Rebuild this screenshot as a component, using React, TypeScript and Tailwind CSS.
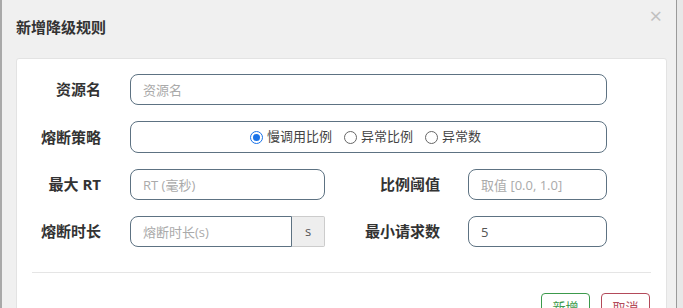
import React from 'react';

const FONT = { fontFamily: '"Open Sans", "Noto Sans CJK SC", sans-serif' };

function Radio({ checked, label }: { checked?: boolean; label: string }) {
  return (
    <label className="flex items-center gap-[4px]">
      <span
        className={
          checked
            ? 'w-[13px] h-[13px] rounded-full border border-[#1a73e8] flex items-center justify-center bg-white'
            : 'w-[13px] h-[13px] rounded-full border border-[#666] bg-white'
        }
      >
        {checked && <span className="w-[7px] h-[7px] rounded-full bg-[#1a73e8]" />}
      </span>
      <span>{label}</span>
    </label>
  );
}

const inputCls =
  'shrink-0 h-[31px] rounded-[8px] border border-[#5d7282] bg-white px-[12px] text-[13px] font-normal text-[#555] placeholder:text-[#aaa] outline-none';

export default function App() {
  return (
    <div className="w-[683px] h-[308px] flex overflow-hidden bg-[#f0f0f0]" style={FONT}>
      <div className="w-[2px] shrink-0 bg-[#a9a9a9]" />
      <div className="flex-1 flex flex-col">
        <div className="shrink-0 h-[58px] relative">
          <h4 className="absolute left-[14px] top-[16px] text-[15px] font-bold text-[#333]">新增降级规则</h4>
          <span className="absolute right-[14px] top-[4px] text-[22px] leading-none text-[#c0c0c0]">×</span>
        </div>
        <div className="shrink-0 ml-[14px] mr-[9px] h-[260px] bg-white border border-[#e3e3e3] rounded-t-[3px] pt-[15px]">
          <div className="flex flex-col gap-[16px] text-[15px] font-bold text-[#333]">
            <div className="flex items-center">
              <div className="w-[84px] shrink-0 text-right">资源名</div>
              <input className={inputCls + ' ml-[29px] w-[477px]'} placeholder="资源名" />
            </div>
            <div className="flex items-center">
              <div className="w-[84px] shrink-0 text-right">熔断策略</div>
              <div className="shrink-0 ml-[29px] w-[477px] h-[32px] rounded-[8px] border border-[#5d7282] flex items-center justify-center gap-[12px] pr-[6px] text-[13px] font-normal text-[#444]">
                <Radio checked label="慢调用比例" />
                <Radio label="异常比例" />
                <Radio label="异常数" />
              </div>
            </div>
            <div className="flex items-center">
              <div className="w-[84px] shrink-0 text-right">最大 RT</div>
              <input className={inputCls + ' ml-[29px] w-[195px]'} placeholder="RT (毫秒)" />
              <div className="w-[115px] shrink-0 text-right">比例阈值</div>
              <input className={inputCls + ' ml-[28px] w-[139px]'} placeholder="取值 [0.0, 1.0]" />
            </div>
            <div className="flex items-center">
              <div className="w-[84px] shrink-0 text-right">熔断时长</div>
              <div className="shrink-0 ml-[29px] w-[195px] flex">
                <input
                  className="h-[31px] w-[162px] rounded-l-[8px] border border-[#5d7282] bg-white px-[12px] text-[13px] font-normal placeholder:text-[#aaa] outline-none"
                  placeholder="熔断时长(s)"
                />
                <div className="h-[31px] flex-1 bg-[#eeeeee] border border-l-0 border-[#cccccc] rounded-r-[2px] flex items-center justify-center text-[13px] font-normal text-[#555]">
                  s
                </div>
              </div>
              <div className="w-[115px] shrink-0 text-right">最小请求数</div>
              <input className={inputCls + ' ml-[28px] w-[139px]'} defaultValue="5" />
            </div>
          </div>
          <div className="mx-[15px] mt-[25px] border-t border-[#e5e5e5]" />
          <div className="flex justify-end gap-[11px] mr-[16px] mt-[20px]">
            <button className="w-[49px] h-[30px] rounded-[4px] border border-[#3c9a4c] text-[#3c9a4c] text-[13px]">新增</button>
            <button className="w-[49px] h-[30px] rounded-[4px] border border-[#b34a5a] text-[#b34a5a] text-[13px]">取消</button>
          </div>
        </div>
      </div>
      <div className="w-[7px] shrink-0 border-l border-[#9a9a9a] bg-[#e8e8e8]" />
    </div>
  );
}
